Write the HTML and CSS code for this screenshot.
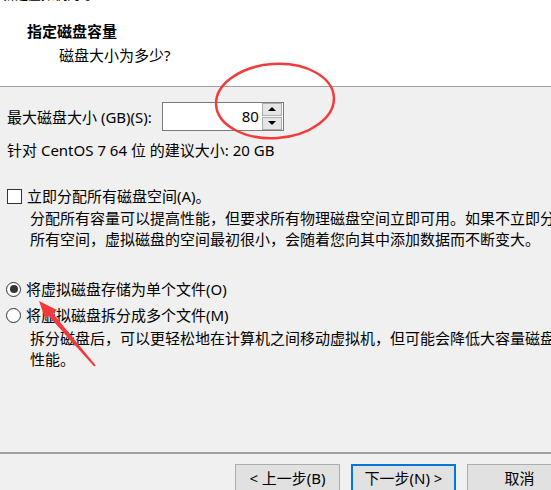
FILE: index.html
```html
<!DOCTYPE html>
<html lang="zh-CN">
<head>
	<meta charset="UTF-8">
	<title>新建虚拟机向导</title>
	<link rel="stylesheet" href="styles.css">
</head>
<body>
	<div class="dialog">
		<div class="header">
			<div class="caption">新建虚拟机向导</div>
			<div class="title">指定磁盘容量</div>
			<div class="subtitle">磁盘大小为多少?</div>
		</div>
		<div class="content">
			<div class="size-row">
				<span>最大磁盘大小 (GB)(S):</span>
				<div class="spin">
					<span class="spin-value">80</span>
					<div class="spin-btns">
						<span class="spin-btn"><i class="tri up"></i></span>
						<span class="spin-btn"><i class="tri down"></i></span>
					</div>
				</div>
			</div>
			<div class="hint">针对 CentOS 7 64 位 的建议大小: 20 GB</div>

			<div class="option check-row">
				<span class="checkbox"></span>
				<span>立即分配所有磁盘空间(A)。</span>
			</div>
			<div class="desc">分配所有容量可以提高性能，但要求所有物理磁盘空间立即可用。如果不立即分配<br>所有空间，虚拟磁盘的空间最初很小，会随着您向其中添加数据而不断变大。</div>

			<div class="option radio-row first">
				<span class="radio checked"></span>
				<span>将虚拟磁盘存储为单个文件(O)</span>
			</div>
			<div class="option radio-row">
				<span class="radio"></span>
				<span>将虚拟磁盘拆分成多个文件(M)</span>
			</div>
			<div class="desc second">拆分磁盘后，可以更轻松地在计算机之间移动虚拟机，但可能会降低大容量磁盘的<br>性能。</div>
		</div>
		<div class="footer">
			<span class="btn">&lt; 上一步(B)</span>
			<span class="btn default">下一步(N) &gt;</span>
			<span class="btn">取消</span>
		</div>

		<svg class="marks" width="551" height="490" viewBox="0 0 551 490">
			<ellipse cx="275" cy="101" rx="59" ry="37" transform="rotate(-4 275 101)" fill="none" stroke="#f23b3b" stroke-width="2.5"/>
			<polygon points="39,301 57,310 52.6,313.1 95.8,365.4 94.2,366.6 48.8,316.3 45.4,319.3" fill="#f03a3c"/>
		</svg>
	</div>
</body>
</html>
```
FILE: styles.css
```css
body{margin:0;padding:0;background:#f0f0f0;overflow:hidden;}
.dialog{
	position:relative;
	width:551px;
	height:490px;
	overflow:hidden;
	font-family:"Noto Sans","Noto Sans CJK SC",sans-serif;
	font-size:15px;
	color:#000;
	white-space:nowrap;
}
.header{
	display:flow-root;
	height:86px;
	background:#fff;
	border-bottom:1px solid #a0a0a0;
}
.caption{
	margin-top:-16px;
	padding-left:2px;
	height:20px;
	line-height:20px;
	font-size:13px;
}
.title{
	margin-top:17px;
	padding-left:27px;
	font-weight:bold;
	line-height:20px;
}
.subtitle{
	margin-top:4px;
	padding-left:59px;
	line-height:20px;
}
.content{
	padding:14px 0 0 7px;
	height:351px;
}
.size-row{
	display:flex;
	align-items:center;
	gap:10px;
	height:30px;
}
.spin{
	display:flex;
	align-items:center;
	width:119px;
	height:27px;
	border:1px solid #7a7a7a;
	background:#fff;
	padding-right:1px;
}
.spin-value{
	flex:1;
	text-align:right;
	padding-right:3px;
	line-height:27px;
}
.spin-btns{
	display:flex;
	flex-direction:column;
	gap:1px;
}
.spin-btn{
	display:flex;
	align-items:center;
	justify-content:center;
	width:18px;
	height:11px;
	border:1px solid #adadad;
	background:#e5e5e5;
}
.tri{
	width:0;
	height:0;
	border-left:4px solid transparent;
	border-right:4px solid transparent;
}
.tri.up{border-bottom:4px solid #000;}
.tri.down{border-top:4px solid #000;}
.hint{
	margin-top:9px;
	line-height:20px;
}
.option{
	display:flex;
	align-items:center;
	gap:5px;
	line-height:20px;
}
.check-row{margin-top:26px;}
.checkbox{
	width:13px;
	height:13px;
	border:1px solid #333;
	background:#fff;
}
.desc{
	padding-left:23px;
	margin-top:2px;
	line-height:21px;
}
.desc.second{margin-top:3px;}
.radio-row.first{margin-top:29px;}
.radio-row{margin-top:6px;}
.radio{
	position:relative;
	width:13px;
	height:13px;
	margin-left:-1px;
	border:1px solid #333;
	border-radius:50%;
	background:#fff;
}
.radio.checked::after{
	content:"";
	position:absolute;
	left:2.5px;
	top:2.5px;
	width:8px;
	height:8px;
	border-radius:50%;
	background:#333;
}
.footer{
	border-top:2px solid #a0a0a0;
	display:flex;
	gap:11px;
	padding:10px 0 0 235px;
}
.btn{
	flex:none;
	width:103px;
	height:26px;
	line-height:26px;
	text-align:center;
	border:1px solid #adadad;
	background:#e1e1e1;
}
.btn.default{
	width:101px;
	height:24px;
	line-height:24px;
	border:2px solid #0078d7;
}
.marks{
	position:absolute;
	left:0;
	top:0;
	pointer-events:none;
}
```
